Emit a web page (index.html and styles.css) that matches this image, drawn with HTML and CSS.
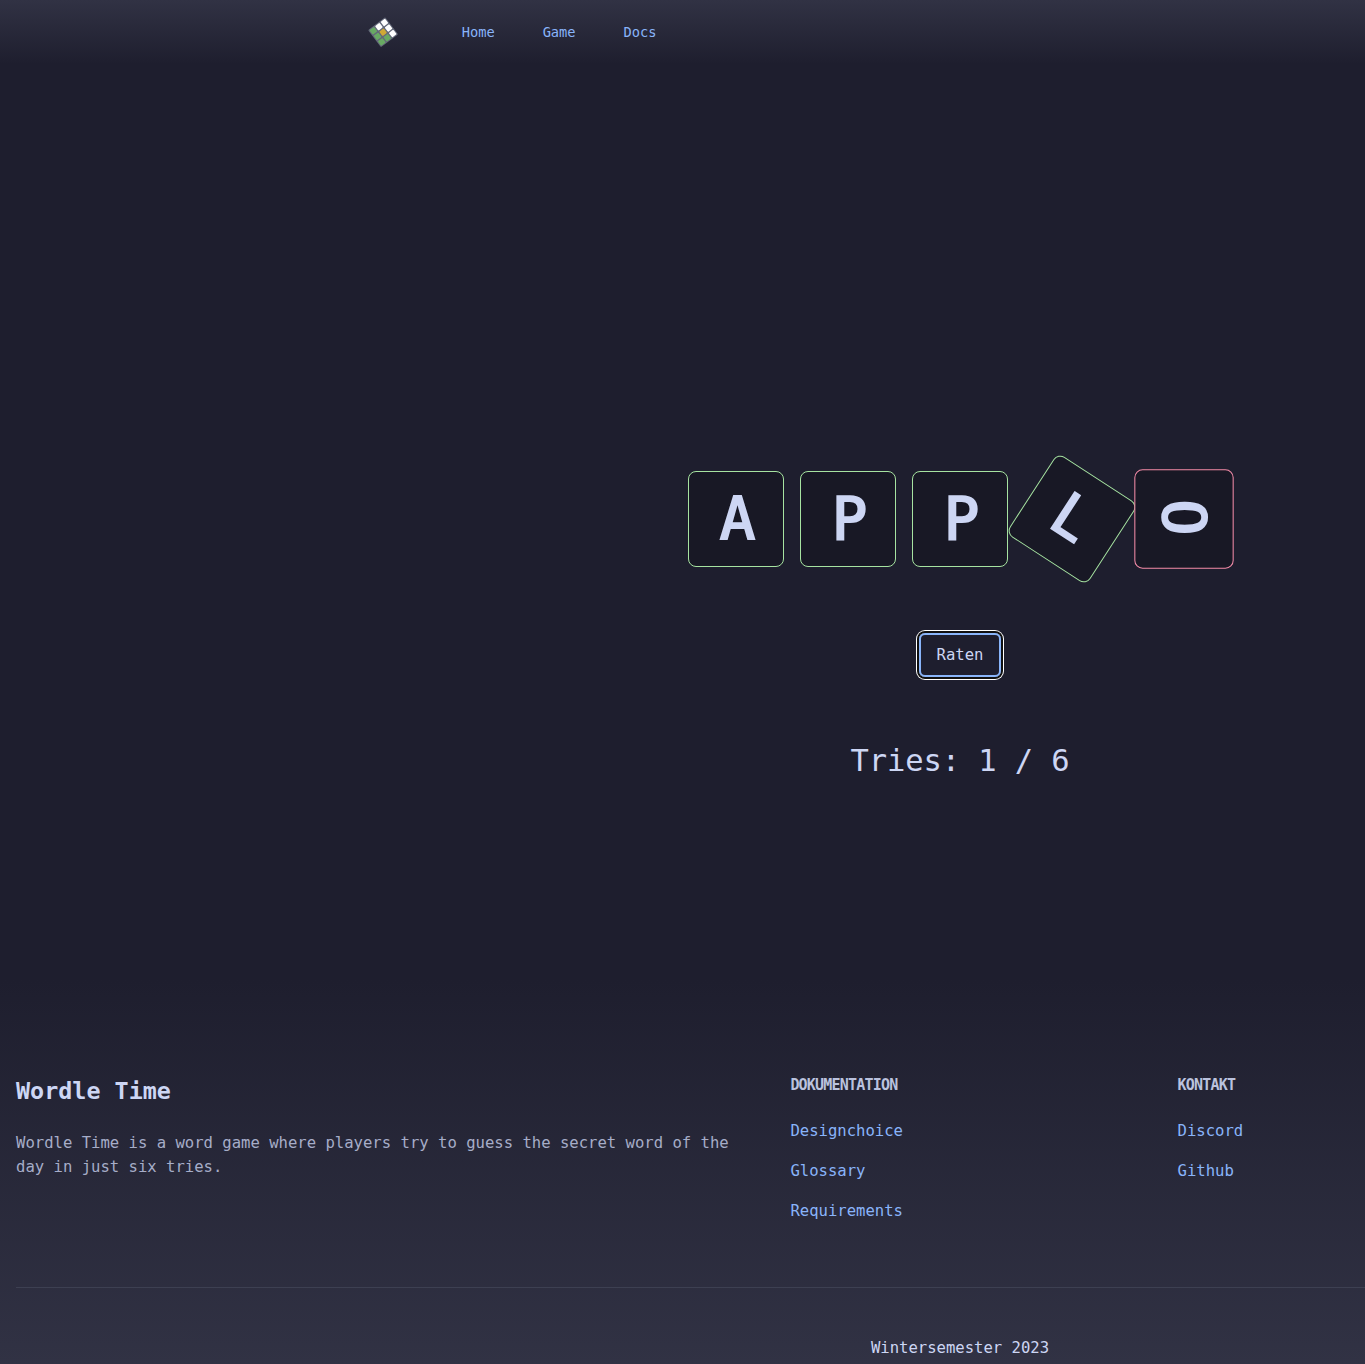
FILE: index.html
```html
<!DOCTYPE html>
<html lang="de">
<head>
<meta charset="utf-8">
<title>Wordle Time</title>
<link rel="stylesheet" href="styles.css">
</head>
<body>
<div class="shell">
  <header class="header">
    <a class="logo" href="#" aria-label="Wordle Time">
      <svg width="32" height="32" viewBox="0 0 32 32">
        <g transform="translate(15.1 16.2) rotate(-37)">
          <rect x="-10.7" y="-10.7" width="21.4" height="21.4" rx="1" fill="#64697a"/>
          <g fill="#fff"><rect x="-2.8" y="-9.7" width="5.6" height="5.6" rx=".8"/><rect x="4.1" y="-9.7" width="5.6" height="5.6" rx=".8"/><rect x="4.1" y="-2.8" width="5.6" height="5.6" rx=".8"/><rect x="4.1" y="4.1" width="5.6" height="5.6" rx=".8"/></g>
          <rect x="-2.8" y="-2.8" width="5.6" height="5.6" rx=".8" fill="#d0a936"/>
          <g fill="#68aa63"><rect x="-9.7" y="-9.7" width="5.6" height="5.6" rx=".8"/><rect x="-9.7" y="-2.8" width="5.6" height="5.6" rx=".8"/><rect x="-9.7" y="4.1" width="5.6" height="5.6" rx=".8"/><rect x="-2.8" y="4.1" width="5.6" height="5.6" rx=".8"/></g>
        </g>
      </svg>
    </a>
    <nav class="nav"><a href="#">Home</a><a href="#">Game</a><a href="#">Docs</a></nav>
  </header>
  <main class="main">
    <div class="tiles">
      <div class="tile"><span>A</span></div>
      <div class="tile"><span>P</span></div>
      <div class="tile"><span>P</span></div>
      <div class="tile turning"><span>L</span></div>
      <div class="tile wrong"><span>O</span></div>
    </div>
    <button class="guess">Raten</button>
    <p class="tries">Tries: 1 / 6</p>
  </main>
  <footer class="footer">
    <div class="columns">
      <section class="about">
        <h2>Wordle Time</h2>
        <p>Wordle Time is a word game where players try to guess the secret word of the day in just six tries.</p>
      </section>
      <section class="links">
        <h3>DOKUMENTATION</h3>
        <a href="#">Designchoice</a><a href="#">Glossary</a><a href="#">Requirements</a>
      </section>
      <section class="links">
        <h3>KONTAKT</h3>
        <a href="#">Discord</a><a href="#">Github</a>
      </section>
    </div>
    <p class="term">Wintersemester 2023</p>
  </footer>
</div>
</body>
</html>
```
FILE: styles.css
```css
* { box-sizing: border-box; margin: 0; }
html, body { overflow: hidden; }
body {
  width: 100%;
  height: 1364px;
  background: #1e1e2e;
  color: #cdd6f4;
  font: 15.6px/24px "DejaVu Sans Mono", monospace;
  letter-spacing: -0.01px;
}
a { color: #89b4fa; text-decoration: none; }
.shell { width: 1920px; height: 1364px; display: flex; flex-direction: column; }
.header {
  height: 64px;
  padding-left: 368px;
  display: flex;
  align-items: center;
  background: linear-gradient(#313244, #1e1e2e);
}
.logo { display: flex; width: 32px; }
.nav {
  display: flex;
  gap: 48px;
  margin-left: 61.7px;
  font-size: 13.7px;
}
.main {
  height: 915px;
  padding-top: 407px;
  display: flex;
  flex-direction: column;
  align-items: center;
}
.tiles { display: flex; gap: 16px; }
.tile {
  width: 96px;
  height: 96px;
  display: flex;
  align-items: center;
  justify-content: center;
  border: 1px solid #a6e3a1;
  border-radius: 8px;
  background: #181825;
  font-size: 59px;
  line-height: 94px;
  letter-spacing: 0;
  -webkit-text-stroke: 2px #cdd6f4;
}
.tile span { padding-left: 3px; }
.turning { transform: rotate(33deg); }
.turning span { padding: 0 1px 2px 0; }
.wrong { border-color: #f38ba8; transform: rotate(-90deg) scale(1.035); }
.wrong span { font-size: 57.5px; padding-top: 4px; }
.guess {
  width: 82px;
  height: 44px;
  margin-top: 66px;
  padding: 0;
  border: 2px solid #89b4fa;
  border-radius: 6px;
  background: transparent;
  color: inherit;
  font: inherit;
  letter-spacing: inherit;
  box-shadow: 0 0 0 2px #101010, 0 0 0 3px #fff;
}
.tries { margin-top: 64px; font-size: 30.5px; line-height: 40px; letter-spacing: -0.12px; }
.footer {
  flex: 1;
  padding: 94px 16px 0;
  background: linear-gradient(#1e1e2e, #313244);
}
.columns {
  height: 215px;
  display: grid;
  grid-template-columns: repeat(5, 1fr);
  gap: 48px;
  border-bottom: 1px solid #3d4052;
}
.about { grid-column: span 2; }
.about h2 { font-size: 23.4px; line-height: 36px; letter-spacing: 0; }
.about p { margin-top: 22px; color: #a6adc8; }
.links { display: flex; flex-direction: column; gap: 16px; }
.links h3 {
  margin-bottom: 6px;
  color: #bac2de;
  font-size: 15px;
  line-height: 24px;
  letter-spacing: -0.8px;
}
.term { margin-top: 48px; text-align: center; }
```
